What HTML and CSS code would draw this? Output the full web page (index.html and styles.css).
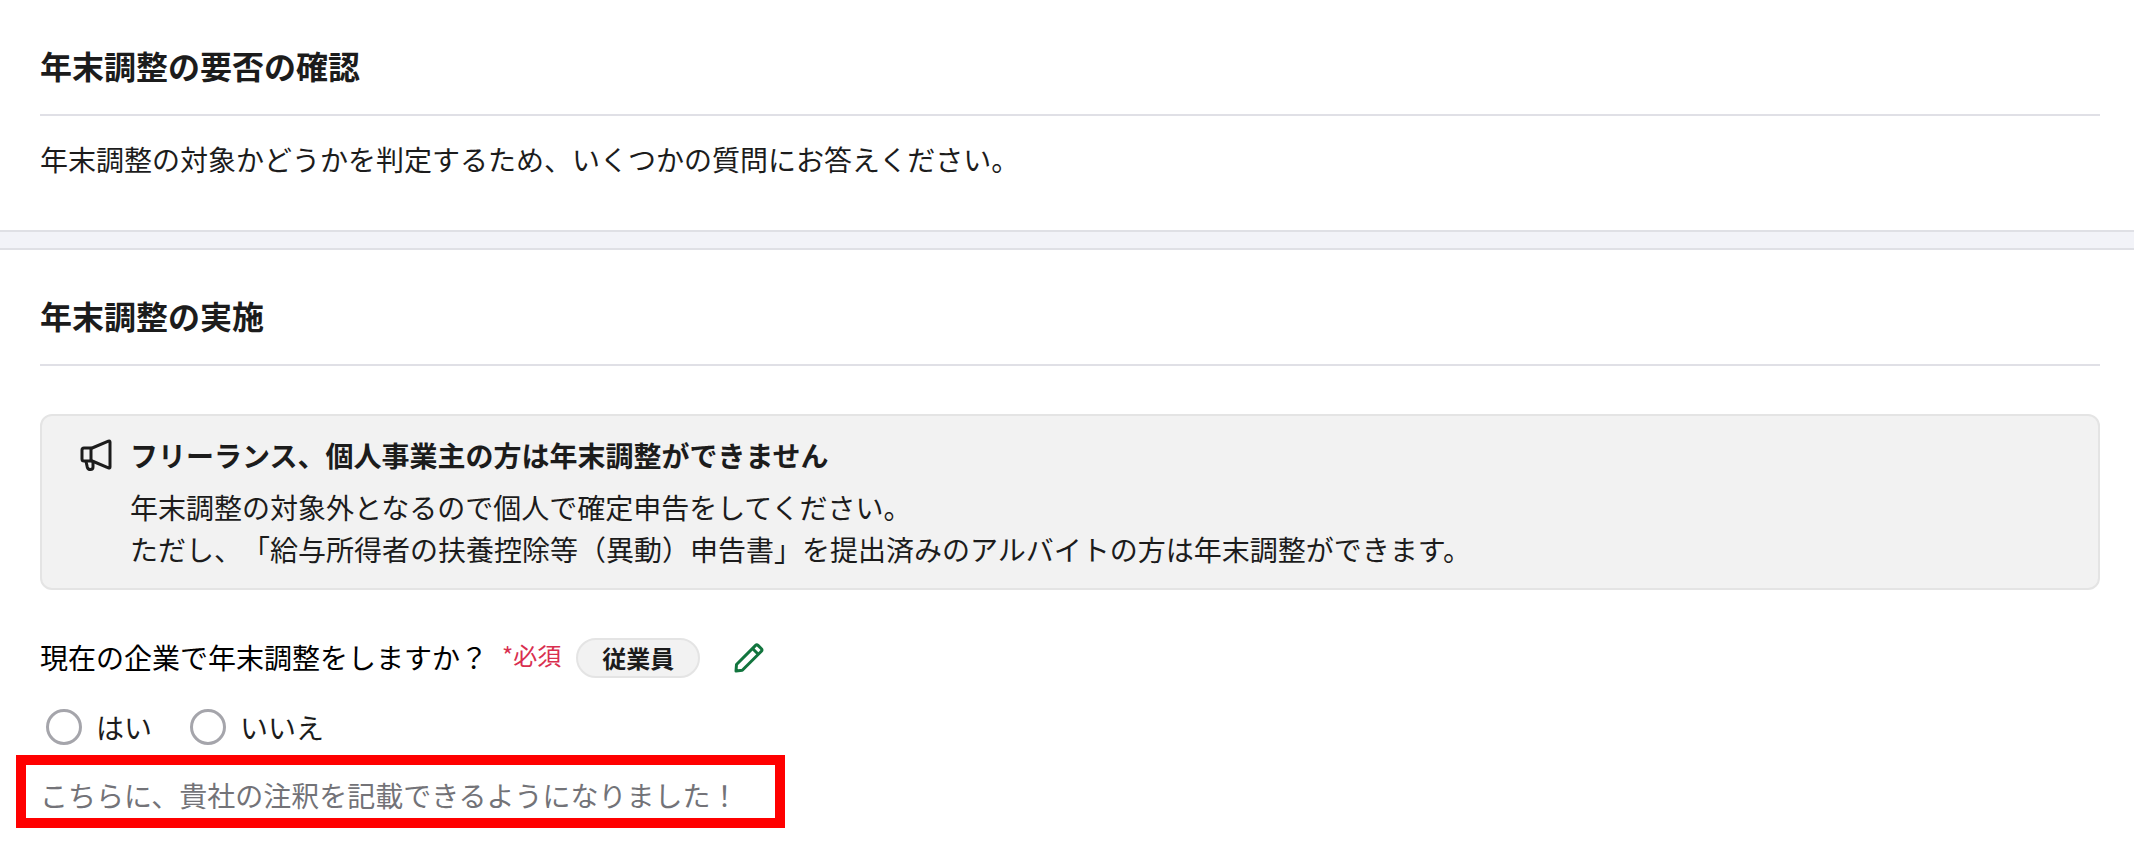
FILE: index.html
```html
<!DOCTYPE html>
<html lang="ja">
<head>
  <meta charset="UTF-8">
  <meta name="viewport" content="width=device-width, initial-scale=1">
  <title>年末調整の要否の確認</title>
  <link rel="stylesheet" href="styles.css">
</head>
<body>

<section class="section">
  <h2 class="section-title">年末調整の要否の確認</h2>
  <p class="lead">年末調整の対象かどうかを判定するため、いくつかの質問にお答えください。</p>
</section>

<div class="divider"></div>

<section class="section">
  <h2 class="section-title">年末調整の実施</h2>

  <div class="info">
    <svg class="info-icon" viewBox="0 0 32 32" fill="none" stroke="currentColor" stroke-width="3" stroke-linejoin="round" stroke-linecap="round" aria-hidden="true">
      <path d="M11 9.500 28.400 2.200Q30 1.500 30 3v25q0 1.500-1.600.800L11 21.500"/>
      <path d="M11 9H4q-2 0-2 2v9q0 2 2 2h7z"/>
      <path d="M6 22.500 7.300 28.200Q8 30.500 10.500 30.500T13 28v-5.500"/>
    </svg>
    <div class="info-body">
      <h3 class="info-title">フリーランス、個人事業主の方は年末調整ができません</h3>
      <p class="info-text">年末調整の対象外となるので個人で確定申告をしてください。<br>ただし、「給与所得者の扶養控除等（異動）申告書」を提出済みのアルバイトの方は年末調整ができます。</p>
    </div>
  </div>

  <form id="formChosei">
    <div class="question" id="question">
      <span class="question-text">現在の企業で年末調整をしますか？</span>
      <span class="required">*必須</span>
      <span class="badge">従業員</span>
      <button type="button" class="edit" aria-label="編集">
        <svg class="edit-icon" viewBox="0 0 30 30" fill="none" stroke="currentColor" stroke-width="3" stroke-linejoin="round" aria-hidden="true">
          <path d="M2 28 2.500 21.500 21.600 2.400Q22.800 1.200 24 2.400L27.400 5.800Q28.600 7 27.400 8.200L8.300 27.300z"/>
          <path d="M18.500 5.500 24.500 11.500"/>
        </svg>
      </button>
    </div>

    <div class="options" role="radiogroup" aria-labelledby="question">
      <label class="option"><input type="radio" name="chosei" value="yes">はい</label>
      <label class="option"><input type="radio" name="chosei" value="no">いいえ</label>
    </div>

    <p class="note">こちらに、貴社の注釈を記載できるようになりました！</p>
  </form>
</section>

</body>
</html>
```
FILE: styles.css
```css
* {
  box-sizing: border-box;
}
body {
  font-family: "Noto Sans CJK JP", sans-serif;
  font-size: 28px;
  line-height: 42px;
  color: #1c1c1c;
  background: #fff;
  margin: 0;
  text-spacing-trim: space-all;
}
h2, h3, p {
  margin: 0;
}
.section {
  padding: 41px 34px 0 40px;
}
.section-title {
  font-size: 32px;
  line-height: 48px;
  padding-bottom: 25px;
  border-bottom: 2px solid #e0e0e6;
}
.lead {
  padding: 22px 0 50px;
}
.divider {
  height: 20px;
  background: #f2f3f8;
  border-top: 2px solid #dfe0e5;
  border-bottom: 2px solid #dfe0e5;
}

/* お知らせ */
.info {
  display: flex;
  gap: 18px;
  margin-top: 48px;
  padding: 18px 38px;
  background: #f2f2f2;
  border: 2px solid #e4e4e4;
  border-radius: 12px;
}
.info-icon {
  flex: none;
  width: 32px;
  height: 32px;
  margin-top: 5px;
}
.info-title {
  font-size: 28px;
  line-height: 42px;
  margin-bottom: 10px;
}

/* 質問 */
.question {
  display: flex;
  align-items: center;
  margin-top: 46px;
  color: #000;
}
.question-text {
  padding-bottom: 2px;
}
.required {
  margin: 0 15px 0 14px;
  font-size: 24px;
  line-height: 36px;
  padding-bottom: 6px;
  color: #d92f4f;
}
.badge {
  padding: 0 24px;
  font-size: 24px;
  line-height: 36px;
  font-weight: bold;
  color: #1c1c1c;
  background: #f2f2f2;
  border: 2px solid #e4e4e4;
  border-radius: 20px;
}
.edit {
  display: flex;
  margin-left: 24px;
  padding: 0 10px;
  color: #12753e;
  background: none;
  border: none;
  cursor: pointer;
}
.edit-icon {
  width: 30px;
  height: 30px;
}
.options {
  display: flex;
  gap: 38px;
  margin: 26px 6px 0;
}
.option {
  display: flex;
  align-items: center;
  gap: 14px;
}
.option input {
  appearance: none;
  width: 36px;
  height: 36px;
  margin: 0;
  background: #fff;
  border: 3px solid #a5a5ab;
  border-radius: 50%;
}
.option input:checked {
  border: 10px solid #12753e;
}
.note {
  width: fit-content;
  margin: 7px 0 0 -24px;
  padding: 9px 36px 2px 14px;
  color: #737378;
  border: 10px solid #f00;
}
```
